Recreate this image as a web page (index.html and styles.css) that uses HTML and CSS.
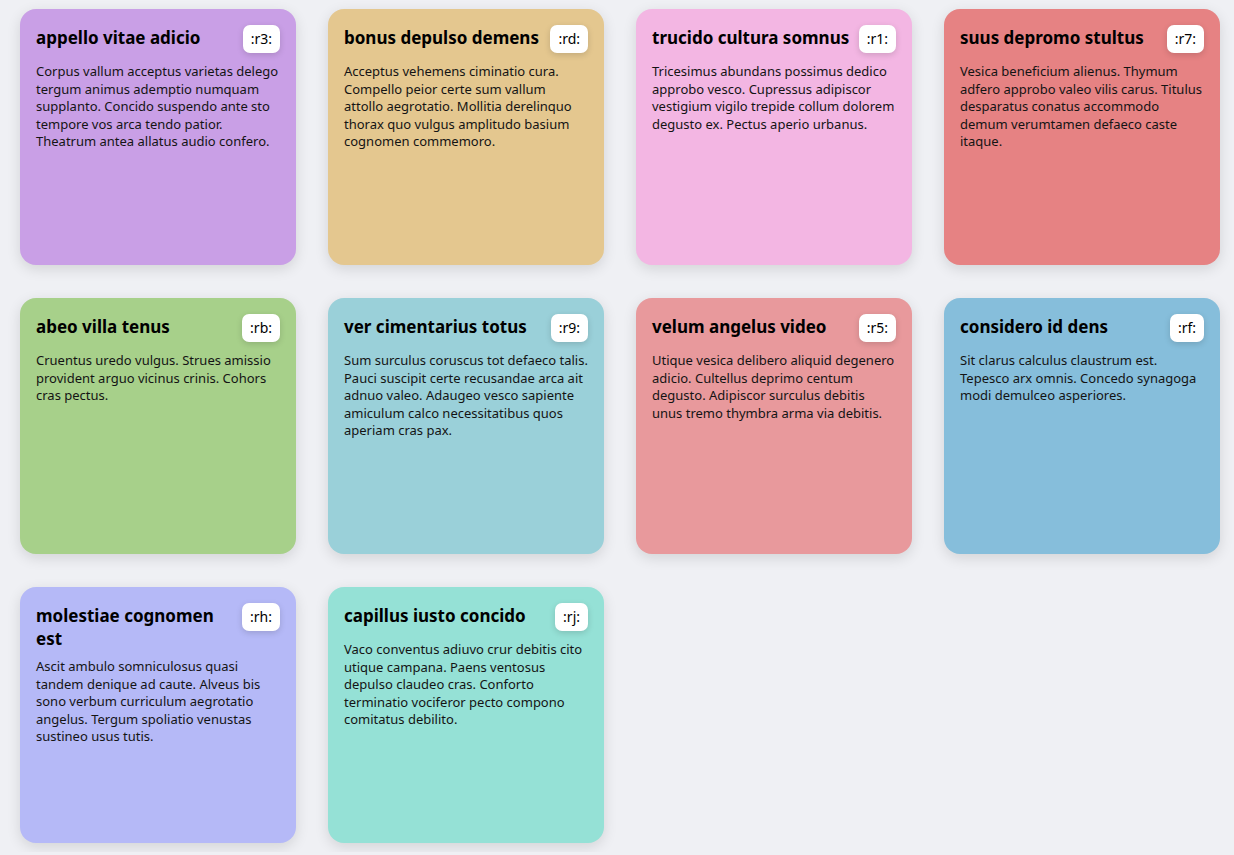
FILE: index.html
```html
<!DOCTYPE html>
<html>
<head>
<meta charset="utf-8">
<link rel="stylesheet" href="styles.css">
</head>
<body>
<div class="grid">
  <div class="card c1"><div class="head"><h3 class="title">appello vitae adicio</h3><span class="badge">:r3:</span></div><p class="text">Corpus vallum acceptus varietas delego tergum animus ademptio numquam supplanto. Concido suspendo ante sto tempore vos arca tendo patior. Theatrum antea allatus audio confero.</p></div>
  <div class="card c2"><div class="head"><h3 class="title">bonus depulso demens</h3><span class="badge">:rd:</span></div><p class="text">Acceptus vehemens ciminatio cura. Compello peior certe sum vallum attollo aegrotatio. Mollitia derelinquo thorax quo vulgus amplitudo basium cognomen commemoro.</p></div>
  <div class="card c3"><div class="head"><h3 class="title">trucido cultura somnus</h3><span class="badge">:r1:</span></div><p class="text">Tricesimus abundans possimus dedico approbo vesco. Cupressus adipiscor vestigium vigilo trepide collum dolorem degusto ex. Pectus aperio urbanus.</p></div>
  <div class="card c4"><div class="head"><h3 class="title">suus depromo stultus</h3><span class="badge">:r7:</span></div><p class="text">Vesica beneficium alienus. Thymum adfero approbo valeo vilis carus. Titulus desparatus conatus accommodo demum verumtamen defaeco caste itaque.</p></div>
  <div class="card c5"><div class="head"><h3 class="title">abeo villa tenus</h3><span class="badge">:rb:</span></div><p class="text">Cruentus uredo vulgus. Strues amissio provident arguo vicinus crinis. Cohors cras pectus.</p></div>
  <div class="card c6"><div class="head"><h3 class="title">ver cimentarius totus</h3><span class="badge">:r9:</span></div><p class="text">Sum surculus coruscus tot defaeco talis. Pauci suscipit certe recusandae arca ait adnuo valeo. Adaugeo vesco sapiente amiculum calco necessitatibus quos aperiam cras pax.</p></div>
  <div class="card c7"><div class="head"><h3 class="title">velum angelus video</h3><span class="badge">:r5:</span></div><p class="text">Utique vesica delibero aliquid degenero adicio. Cultellus deprimo centum degusto. Adipiscor surculus debitis unus tremo thymbra arma via debitis.</p></div>
  <div class="card c8"><div class="head"><h3 class="title">considero id dens</h3><span class="badge">:rf:</span></div><p class="text">Sit clarus calculus claustrum est. Tepesco arx omnis. Concedo synagoga modi demulceo asperiores.</p></div>
  <div class="card c9"><div class="head"><h3 class="title">molestiae cognomen est</h3><span class="badge">:rh:</span></div><p class="text">Ascit ambulo somniculosus quasi tandem denique ad caute. Alveus bis sono verbum curriculum aegrotatio angelus. Tergum spoliatio venustas sustineo usus tutis.</p></div>
  <div class="card c10"><div class="head"><h3 class="title">capillus iusto concido</h3><span class="badge">:rj:</span></div><p class="text">Vaco conventus adiuvo crur debitis cito utique campana. Paens ventosus depulso claudeo cras. Conforto terminatio vociferor pecto compono comitatus debilito.</p></div>
</div>
</body>
</html>
```
FILE: styles.css
```css
html, body {
  margin: 0;
  padding: 0;
  background: #eff0f4;
  font-family: "Noto Sans", "Open Sans", sans-serif;
  color: #111;
}
.grid {
  display: grid;
  grid-template-columns: repeat(4, 276px);
  grid-auto-rows: 256px;
  column-gap: 32px;
  row-gap: 33px;
  padding: 9px 20px;
}
.card {
  border-radius: 16px;
  padding: 16px;
  box-sizing: border-box;
  box-shadow: 0 4px 14px rgba(0, 0, 0, 0.12);
}
.head {
  display: flex;
  justify-content: space-between;
  align-items: flex-start;
  gap: 8px;
  min-height: 30px;
  margin-bottom: 8px;
}
.title {
  margin: 0;
  padding-top: 1px;
  font-size: 17px;
  line-height: 23px;
  font-weight: 700;
  color: #000;
}
.badge {
  flex: none;
  background: #fff;
  border-radius: 7px;
  height: 28px;
  padding: 0 8px;
  line-height: 28px;
  font-size: 14px;
  color: #000;
  box-shadow: 0 2px 6px rgba(0, 0, 0, 0.15);
}
.text {
  margin: 0;
  font-size: 13px;
  line-height: 17.5px;
  color: #141414;
}
.c1 { background: #c99fe6; }
.c2 { background: #e4c78f; }
.c3 { background: #f3b6e3; }
.c4 { background: #e68283; }
.c5 { background: #a7d08a; }
.c6 { background: #9ad0d9; }
.c7 { background: #e8999c; }
.c8 { background: #86bedb; }
.c9 { background: #b5b9f7; }
.c10 { background: #95e1d6; }
```
